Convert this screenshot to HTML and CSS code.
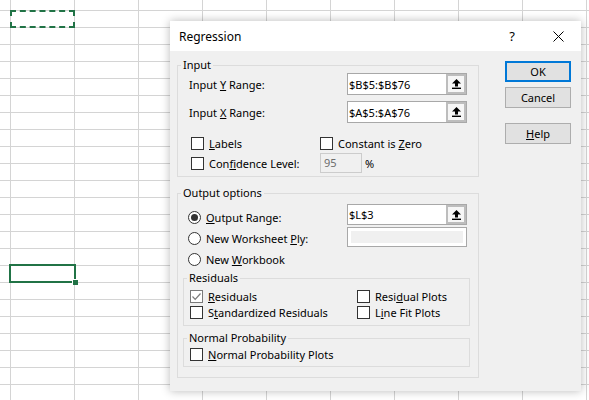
FILE: index.html
```html
<!DOCTYPE html>
<html lang="en">
<head>
<meta charset="utf-8">
<title>Regression</title>
<link rel="stylesheet" href="styles.css">
</head>
<body>
<div class="sheet">
  <div class="copy-marquee"></div>
  <div class="active-cell"><span class="fill-handle"></span></div>
</div>

<div class="dialog">
  <div class="titlebar">
    <span class="title">Regression</span>
    <span class="tb-help">?</span>
    <span class="tb-close"><svg width="11" height="11" viewBox="0 0 11 11"><path d="M0.5 0.5 L10.5 10.5 M10.5 0.5 L0.5 10.5" stroke="#000" stroke-width="1" fill="none"/></svg></span>
  </div>
  <div class="dlg-body">
    <div class="main">
      <fieldset class="group input-group">
        <legend>Input</legend>
        <div class="input-rows">
          <div class="range-row">
            <span class="lbl">Input <u>Y</u> Range:</span>
            <div class="refedit"><span class="val">$B$5:$B$76</span><span class="collapse"><svg width="9" height="10" viewBox="0 0 9 10"><path d="M4.5 0 L9 4.5 H6 V7.5 H3 V4.5 H0 Z" fill="#000"/><rect x="0" y="8.6" width="9" height="1.4" fill="#000"/></svg></span></div>
          </div>
          <div class="range-row second">
            <span class="lbl">Input <u>X</u> Range:</span>
            <div class="refedit"><span class="val">$A$5:$A$76</span><span class="collapse"><svg width="9" height="10" viewBox="0 0 9 10"><path d="M4.5 0 L9 4.5 H6 V7.5 H3 V4.5 H0 Z" fill="#000"/><rect x="0" y="8.6" width="9" height="1.4" fill="#000"/></svg></span></div>
          </div>
          <div class="check-grid">
            <label class="opt"><span class="cb"></span><span><u>L</u>abels</span></label>
            <label class="opt"><span class="cb"></span><span>Constant is <u>Z</u>ero</span></label>
            <label class="opt"><span class="cb"></span><span>Con<u>f</u>idence Level:</span></label>
            <div class="conf"><span class="numbox">95</span><span class="pct">%</span></div>
          </div>
        </div>
      </fieldset>

      <fieldset class="group output-group">
        <legend>Output options</legend>
        <div class="radio-grid">
          <label class="opt"><span class="rb on"></span><span><u>O</u>utput Range:</span></label>
          <div class="refedit box1"><span class="val">$L$3</span><span class="collapse"><svg width="9" height="10" viewBox="0 0 9 10"><path d="M4.5 0 L9 4.5 H6 V7.5 H3 V4.5 H0 Z" fill="#000"/><rect x="0" y="8.6" width="9" height="1.4" fill="#000"/></svg></span></div>
          <label class="opt"><span class="rb"></span><span>New Worksheet <u>P</u>ly:</span></label>
          <div class="plybox"></div>
          <label class="opt"><span class="rb"></span><span>New <u>W</u>orkbook</span></label>
        </div>

        <fieldset class="group sub residuals">
          <legend>Residuals</legend>
          <div class="res-grid">
            <label class="opt"><span class="cb checked"><svg width="11" height="11" viewBox="0 0 11 11"><path d="M1.5 5.5 L4.2 8.3 L9.5 2.5" stroke="#7a7a7a" stroke-width="1.2" fill="none"/></svg></span><span><u>R</u>esiduals</span></label>
            <label class="opt"><span class="cb"></span><span>Resi<u>d</u>ual Plots</span></label>
            <label class="opt"><span class="cb"></span><span>S<u>t</u>andardized Residuals</span></label>
            <label class="opt"><span class="cb"></span><span>L<u>i</u>ne Fit Plots</span></label>
          </div>
        </fieldset>

        <fieldset class="group sub normal">
          <legend>Normal Probability</legend>
          <div class="res-grid">
            <label class="opt"><span class="cb"></span><span><u>N</u>ormal Probability Plots</span></label>
          </div>
        </fieldset>
      </fieldset>
    </div>

    <div class="buttons">
      <button class="btn default">OK</button>
      <button class="btn cancel">Cancel</button>
      <button class="btn help"><u>H</u>elp</button>
    </div>
  </div>
</div>
</body>
</html>
```

FILE: styles.css
```css
html, body {
  margin: 0;
  padding: 0;
}

body {
  width: 589px;
  height: 400px;
  overflow: hidden;
  background-color: #ffffff;
  background-image:
    linear-gradient(to right, #d4d4d4 1px, transparent 1px),
    linear-gradient(to bottom, #d4d4d4 1px, transparent 1px);
  background-size: 64px 17px;
  background-position: 10px 10px;
  font-family: "Noto Sans", "Open Sans", sans-serif;
  font-size: 11px;
  color: #000;
}

.sheet {
  position: relative;
  width: 589px;
  height: 400px;
}

.copy-marquee {
  position: absolute;
  left: 10px;
  top: 10px;
  width: 65px;
  height: 18px;
  box-sizing: border-box;
  border: 2px dashed #217346;
}

.active-cell {
  position: absolute;
  left: 9px;
  top: 264px;
  width: 67px;
  height: 19px;
  box-sizing: border-box;
  border: 2px solid #217346;
}

.fill-handle {
  position: absolute;
  right: -4px;
  bottom: -4px;
  width: 5px;
  height: 5px;
  background: #217346;
  border: 1px solid #fff;
  border-right: 0;
  border-bottom: 0;
}

/* dialog window */
.dialog {
  position: absolute;
  left: 170px;
  top: 21px;
  width: 411px;
  height: 370px;
  background: #f0f0f0;
  box-shadow: 0 0 9px rgba(0, 0, 0, 0.28);
}

.titlebar {
  height: 30px;
  background: #ffffff;
  display: flex;
  align-items: center;
}

.title {
  padding-left: 9px;
  font-size: 12px;
  flex: 1;
}

.tb-help {
  width: 12px;
  text-align: center;
  font-size: 13px;
  margin-right: 17px;
}

.tb-close {
  width: 46px;
  height: 30px;
  display: flex;
  align-items: center;
  justify-content: center;
}

.dlg-body {
  display: flex;
  padding: 7px 0 0 7px;
}

.main {
  width: 302px;
}

/* group boxes */
.group {
  margin: 0;
  padding: 0;
  border: 1px solid #dcdcdc;
  min-width: 0;
}

.group legend {
  margin-left: 3px;
  padding: 0 2px;
  line-height: 14px;
  font-size: 11px;
}

.input-group {
  padding: 1px 0 3px 0;
}

.input-rows {
  margin-left: 11px;
}

.range-row {
  display: flex;
  align-items: center;
  height: 22px;
}

.range-row.second {
  margin-top: 6px;
}

.lbl {
  width: 158px;
}

.refedit {
  width: 120px;
  height: 22px;
  box-sizing: border-box;
  border: 1px solid #a8a8a8;
  background: #ffffff;
  display: flex;
  align-items: center;
}

.refedit .val {
  flex: 1;
  padding-left: 1px;
}

.collapse {
  width: 20px;
  height: 20px;
  box-sizing: border-box;
  border: 2px solid #bdbdbd;
  background: #f6f6f6;
  display: flex;
  align-items: center;
  justify-content: center;
}

.check-grid {
  margin-top: 11px;
  margin-left: 2px;
  display: grid;
  grid-template-columns: 129px auto;
  grid-template-rows: 19px 20px;
  align-items: center;
}

.opt {
  display: flex;
  align-items: center;
  gap: 5px;
  white-space: nowrap;
}

.cb {
  width: 13px;
  height: 13px;
  box-sizing: border-box;
  border: 1px solid #333333;
  background: #ffffff;
  display: flex;
  align-items: center;
  justify-content: center;
  flex: none;
}

.cb.checked {
  border-color: #7a7a7a;
}

.rb {
  width: 13px;
  height: 13px;
  box-sizing: border-box;
  border: 1px solid #333333;
  border-radius: 50%;
  background: #ffffff;
  display: flex;
  align-items: center;
  justify-content: center;
  flex: none;
}

.rb.on::after {
  content: "";
  width: 7px;
  height: 7px;
  border-radius: 50%;
  background: #333333;
}

.conf {
  display: flex;
  align-items: center;
  gap: 3px;
}

.numbox {
  width: 42px;
  height: 20px;
  box-sizing: border-box;
  border: 1px solid #cccccc;
  background: #f0f0f0;
  color: #6d6d6d;
  padding-left: 3px;
  line-height: 18px;
}

/* output */
.output-group {
  margin-top: 9px;
  padding: 7px 0 10px 0;
}

.radio-grid {
  margin-left: 10px;
  display: grid;
  grid-template-columns: 159px 120px;
  grid-template-rows: 21px 21px 21px;
  align-items: center;
}

.refedit.box1 {
  height: 21px;
  margin-top: -6px;
}

.refedit.box1 .collapse {
  height: 19px;
}

.plybox {
  width: 120px;
  height: 20px;
  margin-top: -4px;
  box-sizing: border-box;
  border: 1px solid #a8a8a8;
  background: #f0f0f0;
  box-shadow: inset 0 0 0 3px #ffffff;
}

.sub {
  width: 287px;
  box-sizing: border-box;
  margin-left: 5px;
}

.residuals {
  margin-top: 1px;
  padding: 3px 0 5px 0;
}

.normal {
  margin-top: 5px;
  padding: 1px 0 4px 0;
}

.res-grid {
  margin-left: 6px;
  display: grid;
  grid-template-columns: 167px auto;
  grid-auto-rows: 16px;
  align-items: center;
}

/* buttons */
.buttons {
  margin-left: 26px;
  padding-top: 3px;
  display: flex;
  flex-direction: column;
  width: 66px;
}

.btn {
  width: 66px;
  height: 21px;
  box-sizing: border-box;
  border: 1px solid #adadad;
  background: #e1e1e1;
  font-family: "Noto Sans", "Open Sans", sans-serif;
  font-size: 11px;
  color: #000;
  padding: 0;
  margin: 0;
  line-height: 18px;
}

.btn.default {
  border: 2px solid #0078d7;
}

.btn.cancel {
  margin-top: 5px;
}

.btn.help {
  margin-top: 15px;
}
```
